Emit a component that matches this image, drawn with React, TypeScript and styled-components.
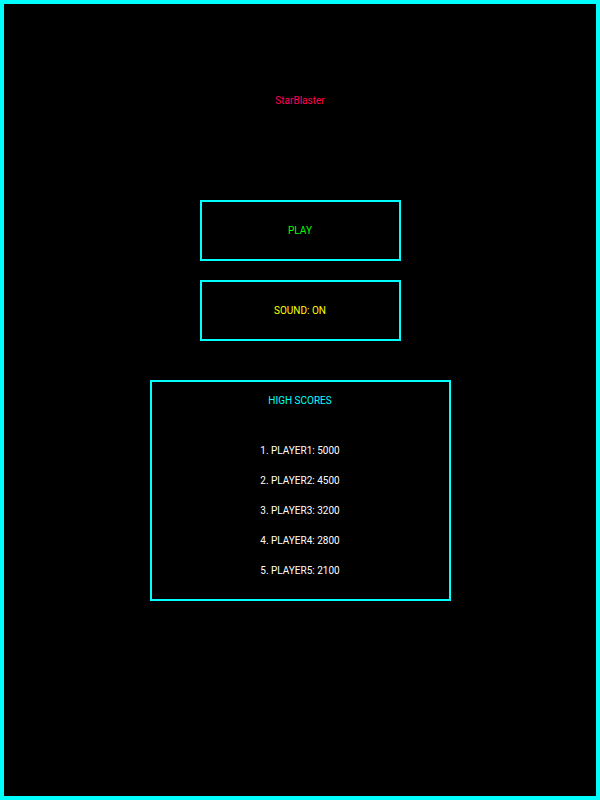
import React from 'react';
import styled, { createGlobalStyle } from 'styled-components';

const scores = [
    { name: 'PLAYER1', score: 5000 },
    { name: 'PLAYER2', score: 4500 },
    { name: 'PLAYER3', score: 3200 },
    { name: 'PLAYER4', score: 2800 },
    { name: 'PLAYER5', score: 2100 },
];

const GlobalStyle = createGlobalStyle`
    html, body {
        margin: 0;
        padding: 0;
        background: #000;
    }
    * {
        box-sizing: border-box;
    }
`

const Screen = styled.div`
    width: 600px;
    height: 800px;
    border: 4px solid #00ffff;
    background: #000;
    display: flex;
    flex-direction: column;
    align-items: center;
    padding-top: 87px;
    font-family: Roboto, "Liberation Sans", sans-serif;
    font-size: 10px;
`
const Title = styled.h1`
    margin: 0;
    font-size: 10px;
    font-weight: 400;
    line-height: 20px;
    color: #ff0055;
`
const Menu = styled.div`
    display: flex;
    flex-direction: column;
    gap: 19px;
    margin-top: 89px;
`
const MenuButton = styled.button<{ $color: string }>`
    width: 201px;
    height: 61px;
    border: 2px solid #00ffff;
    background: transparent;
    color: ${p => p.$color};
    font-family: inherit;
    font-size: 10px;
    padding: 0;
    cursor: pointer;
`
const ScoreBoard = styled.div`
    width: 301px;
    height: 221px;
    margin-top: 39px;
    border: 2px solid #00ffff;
    padding-top: 9px;
    display: flex;
    flex-direction: column;
    align-items: center;
`
const ScoreTitle = styled.h2`
    margin: 0;
    font-size: 10px;
    font-weight: 400;
    line-height: 20px;
    color: #00ffff;
`
const ScoreList = styled.ol`
    list-style: none;
    margin: 25px 0 0;
    padding: 0;
    text-align: center;
`
const ScoreRow = styled.li`
    line-height: 30px;
    color: #ffffff;
`

function App() {
    return (
        <>
            <GlobalStyle />
            <Screen>
                <Title>StarBlaster</Title>
                <Menu>
                    <MenuButton $color="#00ff00">PLAY</MenuButton>
                    <MenuButton $color="#ffff00">SOUND: ON</MenuButton>
                </Menu>
                <ScoreBoard>
                    <ScoreTitle>HIGH SCORES</ScoreTitle>
                    <ScoreList>
                        {scores.map((s, i) => (
                            <ScoreRow key={s.name}>{i + 1}. {s.name}: {s.score}</ScoreRow>
                        ))}
                    </ScoreList>
                </ScoreBoard>
            </Screen>
        </>
    );
}

export default App;
